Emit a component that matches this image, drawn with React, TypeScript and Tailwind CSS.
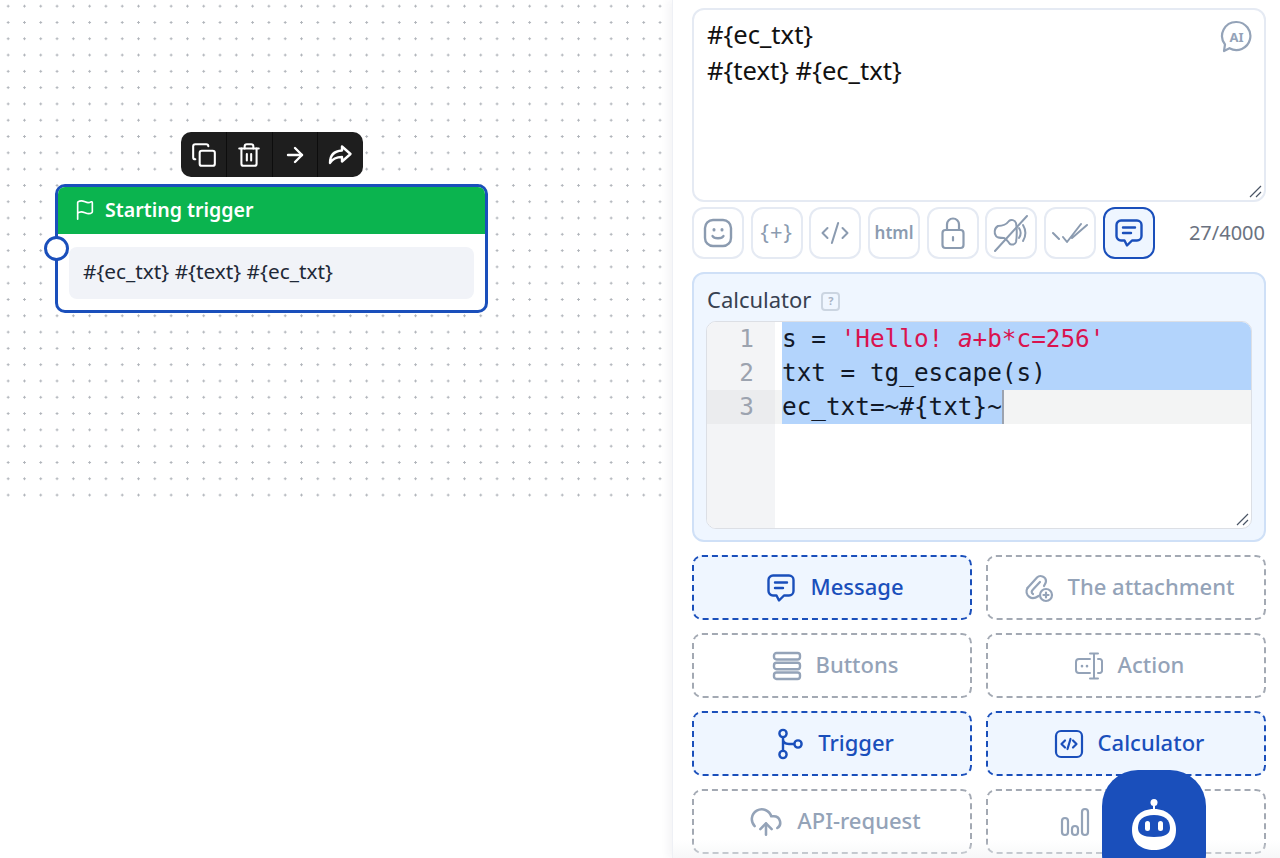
import React from 'react';
import { Copy, Trash2, ArrowRight, Flag, CodeXml, CloudUpload } from 'lucide-react';

const UI_FONT = "font-['Noto_Sans',sans-serif]";

const ResizeGrip = () => (
  <svg width="14" height="14" viewBox="0 0 14 14" className="absolute right-0.5 bottom-0.5 text-gray-600" fill="none" stroke="currentColor" strokeWidth="1.2">
    <path d="M2 13 13 2M8 13l5-5" />
  </svg>
);

const SmileIcon = () => (
  <svg width="30" height="32" viewBox="0 0 30 32" fill="none" stroke="#8b9bb0" strokeWidth="2.4" strokeLinecap="round">
    <rect x="2" y="3" width="26" height="26" rx="8" />
    <path d="M9.500 19c1.500 3 9.500 3 11 0" />
    <path d="M11 12.500v.6M19 12.500v.6" strokeWidth="3" />
  </svg>
);

const LockIcon = () => (
  <svg width="26" height="34" viewBox="0 0 26 34" fill="none" stroke="#8b9bb0" strokeWidth="2.200" strokeLinecap="round">
    <rect x="2.500" y="14" width="21" height="18" rx="3" />
    <path d="M7 14V8.500a6 6 0 0 1 12 0V14" />
    <path d="M13 21v3.500" />
  </svg>
);

const MutedIcon = () => (
  <svg width="38" height="40" viewBox="0 0 38 40" fill="none" stroke="#8b9bb0" strokeWidth="2" strokeLinecap="round">
    <path d="M6 13c3 0 8-1 11-5 2-2 6-1 7 2 1 4 1 14 0 19-1 3-4 3-6 2-2-2-3-5-6-6-2 0-7 0-8-2-2-2-2-8 2-10z" />
    <path d="M27 15c2 3 2 7 0 10M31 12c3 5 3 11 0 16" />
    <path d="M3 38 35 3" />
  </svg>
);

const DoubleCheck = () => (
  <svg width="36" height="24" viewBox="0 0 36 24" fill="none" stroke="#8b9bb0" strokeWidth="2" strokeLinecap="round" strokeLinejoin="round">
    <path d="M1 12l6 6M11 16l4 5L29 3M20 17 35 4" />
  </svg>
);

const MessageIcon = ({ size = 30, color = '#1a4fbb' }: { size?: number; color?: string }) => (
  <svg width={size} height={size} viewBox="0 0 30 30" fill="none" stroke={color} strokeWidth="2.400" strokeLinecap="round" strokeLinejoin="round">
    <path d="M7 2.500h16a4.500 4.500 0 0 1 4.500 4.500v11a4.500 4.500 0 0 1-4.500 4.500h-5L13 27.500l-2.500-5H7A4.500 4.500 0 0 1 2.500 18V7A4.500 4.500 0 0 1 7 2.500z" />
    <path d="M9 9.500h12M9 15h8" />
  </svg>
);

const AttachIcon = () => (
  <svg width="30" height="32" viewBox="0 0 30 32" fill="none" stroke="#94a3b8" strokeWidth="2.200" strokeLinecap="round">
    <path d="M3.500 16 13 5.500c3-3 9-1 9 3.500 0 2-1 3-2 5" />
    <path d="M3.500 16c-2 3-1 7 2 9 3 2 6 1 9-1" />
    <path d="M9 22c-2-1-1.500-3 0-4.500L16 10" />
    <circle cx="22" cy="23" r="6" />
    <path d="M22 20.500v5M19.500 23h5" />
  </svg>
);

const RowsIcon = () => (
  <svg width="30" height="30" viewBox="0 0 30 30" fill="none" stroke="#94a3b8" strokeWidth="2.400">
    <rect x="2" y="2" width="26" height="6.500" rx="2.500" />
    <rect x="2" y="11.750" width="26" height="6.500" rx="2.500" />
    <rect x="2" y="21.500" width="26" height="6.500" rx="2.500" />
  </svg>
);

const ActionIcon = () => (
  <svg width="30" height="30" viewBox="0 0 30 30" fill="none" stroke="#94a3b8" strokeWidth="2" strokeLinecap="round">
    <path d="M16 8H5a3 3 0 0 0-3 3v8a3 3 0 0 0 3 3h11" />
    <path d="M24 8h2a2.500 2.500 0 0 1 2 3v8a2.500 2.500 0 0 1-2 3h-2" />
    <path d="M20 3v24M16 2.500h8M16 27.500h8" />
    <path d="M8 15v.2M13 15v.2" strokeWidth="2.600" />
  </svg>
);

const TriggerIcon = () => (
  <svg width="28" height="32" viewBox="0 0 28 32" fill="none" stroke="#1a4fbb" strokeWidth="2.400">
    <circle cx="7" cy="5.500" r="3.600" />
    <circle cx="7" cy="26.500" r="3.600" />
    <circle cx="22" cy="16" r="3.600" />
    <path d="M7 9v14M7 11c0 4 3 5 6 5h5.500" />
  </svg>
);

const BarsIcon = () => (
  <svg width="30" height="30" viewBox="0 0 30 30" fill="none" stroke="#94a3b8" strokeWidth="2.200">
    <rect x="2" y="11" width="6" height="17" rx="3" />
    <rect x="12" y="19" width="6" height="9" rx="3" />
    <rect x="22" y="2" width="6" height="26" rx="3" />
  </svg>
);

const ShareIcon = () => (
  <svg width="26" height="26" viewBox="0 0 26 26" fill="none" stroke="#fff" strokeWidth="2.400" strokeLinejoin="round">
    <path d="M15 4.500 23.500 12 15 19.500V15c-5.500 0-9 1-12 6 0-7 3.500-12 12-12.500z" />
  </svg>
);

const RobotIcon = () => (
  <svg width="48" height="56" viewBox="0 0 48 56" fill="none">
    <circle cx="24" cy="4.500" r="3.500" fill="#fff" />
    <path d="M24 7v6" stroke="#fff" strokeWidth="2" />
    <path d="M24 11c14 0 22 9 22 21 0 13-9 20-22 20S2 45 2 32c0-12 8-21 22-21z" fill="#fff" />
    <path d="M24 17c11 0 16 5 16 13 0 6-5 9-16 9S8 36 8 30c0-8 5-13 16-13z" fill="#1a4fbb" />
    <rect x="15" y="23" width="5" height="10" rx="2.500" fill="#fff" />
    <rect x="28" y="23" width="5" height="10" rx="2.500" fill="#fff" />
  </svg>
);

const AiBadge = () => (
  <div className="absolute right-[11px] top-[10px] flex size-[33px] items-center justify-center text-[13px] font-bold text-[#94a3b8]">
    <svg width="33" height="33" viewBox="0 0 33 33" fill="none" stroke="#94a3b8" strokeWidth="2.200" className="absolute inset-0">
      <path d="M16.500 2a14 14 0 1 1-7 26.200L4 31l1-6.500A14 14 0 0 1 16.500 2z" strokeLinejoin="round" />
    </svg>
    AI
  </div>
);

const CodeSquare = () => (
  <svg width="30" height="30" viewBox="0 0 30 30" fill="none" stroke="#1a4fbb" strokeWidth="2.200" strokeLinecap="round" strokeLinejoin="round">
    <rect x="2" y="2" width="26" height="26" rx="5" />
    <path d="M11 11.500 7.500 15l3.500 3.500M19 11.500l3.500 3.500-3.500 3.500M16.500 10l-3 10" />
  </svg>
);

const toolbarIcons = [
  <SmileIcon key="smile" />,
  <span key="vars" className="pb-[3px] text-[22px] tracking-[1px] text-[#8b9bb0]">{'{+}'}</span>,
  <CodeXml key="code" size={30} color="#8b9bb0" strokeWidth={1.6} />,
  <span key="html" className="text-[17px] font-semibold text-[#8b9bb0]">html</span>,
  <LockIcon key="lock" />,
  <MutedIcon key="mute" />,
  <DoubleCheck key="check" />,
];

const blocks = [
  { label: 'Message', icon: <MessageIcon />, active: true },
  { label: 'The attachment', icon: <AttachIcon />, active: false },
  { label: 'Buttons', icon: <RowsIcon />, active: false },
  { label: 'Action', icon: <ActionIcon />, active: false },
  { label: 'Trigger', icon: <TriggerIcon />, active: true },
  { label: 'Calculator', icon: <CodeSquare />, active: true },
  { label: 'API-request', icon: <CloudUpload size={34} color="#94a3b8" strokeWidth={1.8} />, active: false },
  { label: 'Analytics', icon: <BarsIcon />, active: false },
];

const FlowNode = () => (
  <div className="absolute left-[55px] top-[132px] w-[433px]">
    <div className="mx-auto mb-[7px] flex h-[45px] w-[182px] divide-x divide-[#0d0d0d] rounded-[10px] bg-[#1e1e1e] pl-[1px]">
      <div className="flex flex-1 items-center justify-center"><Copy size={26} color="#fff" strokeWidth={1.9} /></div>
      <div className="flex flex-1 items-center justify-center"><Trash2 size={26} color="#fff" strokeWidth={1.9} /></div>
      <div className="flex flex-1 items-center justify-center"><ArrowRight size={24} color="#fff" strokeWidth={2.4} /></div>
      <div className="flex flex-1 items-center justify-center"><ShareIcon /></div>
    </div>
    <div className="relative h-[129px] rounded-[10px] border-[3px] border-[#1a4fbb] bg-white">
      <div className="flex h-[47px] items-center gap-[9px] rounded-t-[7px] bg-[#0bb44f] pb-[1px] pl-4 text-[19.600px] font-semibold text-white">
        <Flag size={22} strokeWidth={1.8} />
        <span>Starting trigger</span>
      </div>
      <div className="px-[11px] pt-[13px]">
        <div className="flex h-[52px] items-center rounded-lg bg-[#f1f3f8] px-[14px] pb-[2px] text-[20.800px] text-[#1f2937]">#{'{ec_txt}'} #{'{text}'} #{'{ec_txt}'}</div>
      </div>
      <div className="absolute -left-[14px] top-[49px] size-[25px] rounded-full border-[3px] border-[#1a4fbb] bg-white" />
    </div>
  </div>
);

const CodeEditor = () => (
  <div className="relative mt-[8px] flex h-[208px] overflow-hidden rounded-[10px] border border-[#dcdfe5] bg-white font-['DejaVu_Sans_Mono',monospace] text-[24.350px] leading-[34px]">
    <div className="w-[68px] shrink-0 bg-[#f3f4f6] pr-[21px] text-right text-[#9ca3af]">
      <div>1</div>
      <div>2</div>
      <div className="-mr-[21px] bg-[#ebecee] pr-[21px]">3</div>
    </div>
    <div className="flex-1 text-[#111827]">
      <div className="ml-[7px] bg-[#b3d4fc]">s = <span className="text-[#d9134f]">'Hello! <span className="italic">a</span>+b*c=256'</span></div>
      <div className="ml-[7px] bg-[#b3d4fc]">txt = tg_escape(s)</div>
      <div className="bg-[#f3f4f4] pl-[7px]">
        <span className="inline-block border-r-2 border-[#9ca3af] bg-[#b3d4fc]">ec_txt=~#{'{txt}'}~</span>
      </div>
    </div>
    <ResizeGrip />
  </div>
);

const BlockButton = ({ label, icon, active }: { label: string; icon: React.ReactNode; active: boolean }) => (
  <div className={`flex h-[65px] items-center justify-center gap-[14px] rounded-[10px] border-2 border-dashed pl-[6px] text-[22px] font-medium ${active ? 'border-[#1a4fbb] bg-[#eff6ff] text-[#1a4fbb]' : 'border-[#a3a9b3] bg-white text-[#94a3b8]'}`}>
    {icon}
    <span className="pb-[2px]">{label}</span>
  </div>
);

export default function App() {
  return (
    <div className={`relative flex h-[858px] w-[1280px] overflow-hidden bg-white ${UI_FONT}`}>
      {/* Canvas */}
      <div className="relative w-[672px] shrink-0">
        <div className="h-[498px] w-[668px] bg-[radial-gradient(circle,#b0b4ba_1px,transparent_1.3px)] bg-[size:16.300px_16.300px] bg-[position:0px_-2px]" />
        <FlowNode />
      </div>

      {/* Settings panel */}
      <div className="relative flex-1 border-l border-[#eef0f5] pt-2 pr-[14px] pl-[19px] shadow-[-4px_0_8px_rgba(30,40,70,0.05)]">
        <div className="relative h-[194px] rounded-xl border-2 border-[#e5eaf3] bg-white px-[13px] pt-[7px] text-[25.600px] leading-[36px] text-[#111]">
          <div>#{'{ec_txt}'}</div>
          <div>#{'{text}'} #{'{ec_txt}'}</div>
          <AiBadge />
          <ResizeGrip />
        </div>

        <div className="mt-[5px] flex h-[52px] items-center gap-[6.700px]">
          {toolbarIcons.map((icon, i) => (
            <div key={i} className="flex h-[52px] w-[52px] items-center justify-center rounded-xl border-2 border-[#e5eaf3]">{icon}</div>
          ))}
          <div className="flex h-[52px] w-[52px] items-center justify-center rounded-xl border-2 border-[#1a4fbb] bg-[#eff6ff]"><MessageIcon /></div>
          <div className="ml-auto pr-[1px] text-[20px] text-[#6b7280]">27/4000</div>
        </div>

        <div className="mt-[13px] h-[270px] rounded-xl border-2 border-[#cfe0f7] bg-[#eff6ff] px-[12px] pt-[11px]">
          <div className="flex h-[28px] items-center gap-[10px] pl-[1px] text-[22px] text-[#374151]">
            Calculator
            <span className="mt-[4px] flex size-[19px] items-center justify-center rounded-[4px] border-2 border-[#cbd5e1] text-[11px] font-bold text-[#a8b3c4]">?</span>
          </div>
          <CodeEditor />
        </div>

        <div className="mt-[13px] grid grid-cols-2 gap-x-[14px] gap-y-[13px]">
          {blocks.map((b, i) => <BlockButton key={i} {...b} />)}
        </div>

        <div className="absolute inset-x-0 bottom-0 h-[18px] bg-gradient-to-b from-transparent to-[#f1f2f4]/60" />
      </div>

      {/* Assistant launcher */}
      <div className="absolute left-[1102px] top-[770px] flex h-[120px] w-[104px] justify-center rounded-[36px] bg-[#1a4fbb] pt-[28px]">
        <RobotIcon />
      </div>
    </div>
  );
}
